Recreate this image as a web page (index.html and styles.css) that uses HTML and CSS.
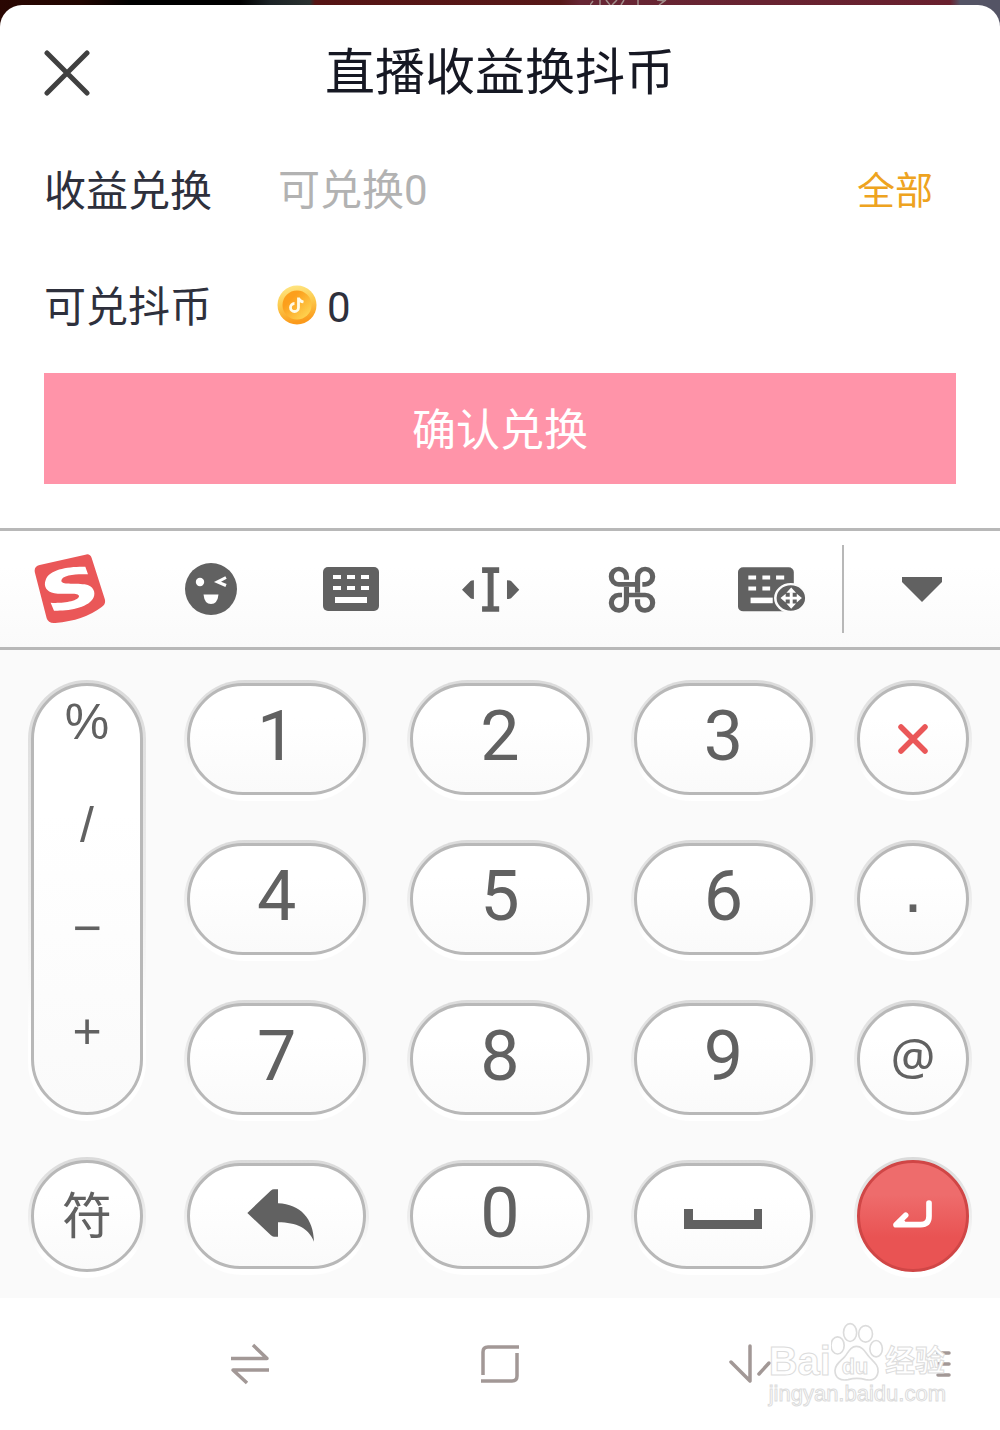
FILE: index.html
```html
<!DOCTYPE html>
<html lang="zh-CN">
<head>
  <meta charset="UTF-8" />
  <meta name="viewport" content="width=device-width, initial-scale=1.0" />
  <title>直播收益换抖币</title>
  <link rel="stylesheet" href="styles.css">
</head>
<body>
  <svg class="backdrop" width="80" height="5" viewBox="0 0 80 5" fill="none" stroke="#a08d8a" stroke-width="1.500"><path d="M3 1L0 5M10 0V5M16 0L20 5M27 0L22 5M34 0L31 5M48 0V5M76 0L69 5M67 0L75 1"/></svg>

  <main class="sheet">
    <header class="sheet-header">
      <button class="close" aria-label="关闭">
        <svg width="46" height="46" viewBox="0 0 46 46"><path d="M3 3L43 43M43 3L3 43" fill="none" stroke="#404040" stroke-width="5" stroke-linecap="round"/></svg>
      </button>
      <h1>直播收益换抖币</h1>
    </header>

    <form class="exchange" onsubmit="return false">
      <div class="row">
        <label for="amount">收益兑换</label>
        <input type="text" id="amount" inputmode="numeric" placeholder="可兑换0">
        <button type="button" class="all" onclick="fillAll()">全部</button>
      </div>
      <div class="row">
        <label for="coins">可兑抖币</label>
        <svg class="coin" width="40" height="40" viewBox="0 0 40 40">
          <defs>
            <linearGradient id="rim" x1="0" y1="0" x2="0.2" y2="1"><stop offset="0" stop-color="#ffe98a"/><stop offset="0.5" stop-color="#fccb4e"/><stop offset="1" stop-color="#fb9a1b"/></linearGradient>
            <linearGradient id="face" x1="0" y1="0" x2="1" y2="1"><stop offset="0.3" stop-color="#fc9f1c"/><stop offset="1" stop-color="#ffdf5c"/></linearGradient>
          </defs>
          <circle cx="20" cy="20" r="19.5" fill="url(#rim)"/>
          <circle cx="20" cy="20" r="14.5" fill="url(#face)"/>
          <path d="M21.5 12.5V22.5A4 4 0 1 1 17.5 18.5M21.5 13.5C22.5 15.5 24 16.5 26.5 17" fill="none" stroke="#fffbe6" stroke-width="2.8"/>
        </svg>
        <output id="coins">0</output>
      </div>
      <button type="submit" class="confirm">确认兑换</button>
    </form>
  </main>

  <section class="keyboard">
    <div class="toolbar">
      <div class="tools">
        <button aria-label="搜狗">
          <svg width="72" height="70" viewBox="101 103 216 210">
            <path d="M118 136L255 105Q269 101 274 115L313 237Q318 253 304 262Q250 303 165 310Q144 312 139 296L104 160Q99 141 118 136Z" fill="#ea5758"/>
            <path d="M255 141L263 164C238 162 184 164 183 183C183 196 220 189 253 194C281 199 286 219 280 233C267 264 205 275 161 273L151 249C180 252 237 245 236 229C235 216 189 226 162 221C138 217 129 199 136 181C146 149 203 140 255 141Z" fill="#fff"/>
          </svg>
        </button>
        <button aria-label="表情">
          <svg width="52" height="52" viewBox="0 0 52 52">
            <circle cx="26" cy="26" r="26" fill="#616161"/>
            <circle cx="15" cy="19" r="4.2" fill="#fff"/>
            <path d="M41 14.5L32.5 18.8L41 22.5" fill="none" stroke="#fff" stroke-width="3"/>
            <path d="M18.5 31.5H33.5Q32.500 41 26 41Q19.500 41 18.5 31.500Z" fill="#fff"/>
          </svg>
        </button>
        <button aria-label="键盘">
          <svg width="56" height="44" viewBox="0 0 56 44">
            <rect width="56" height="44" rx="5" fill="#616161"/>
            <path d="M10 10H18M24 10H32M38 10H46M10 21H18M24 21H32M38 21H46" stroke="#fff" stroke-width="4"/>
            <path d="M12 33H44" stroke="#fff" stroke-width="6"/>
          </svg>
        </button>
        <button aria-label="光标">
          <svg width="58" height="45" viewBox="114 139 156 135" preserveAspectRatio="none" fill="#616161">
            <path d="M168 140H214V157H199V257H214V273H168V257H183V157H168Z"/>
            <path d="M114 207L137 181Q139 179 146 179V235Q139 235 137 233ZM268 207L246 181Q243 179 235 179V235Q243 235 246 233Z"/>
          </svg>
        </button>
        <button aria-label="快捷短语">
          <svg width="48" height="47" viewBox="507 136 130 141" preserveAspectRatio="none" fill="none" stroke="#616161" stroke-width="14">
            <path d="M557 177V168A20.500 23 0 1 0 536 191H593"/>
            <path d="M600 191H607A20.500 23 0 1 0 587 168V216"/>
            <path d="M587 236V245A20.500 23 0 1 0 607 223H551"/>
            <path d="M545 223H536A20.500 23 0 1 0 557 245V198"/>
          </svg>
        </button>
        <button aria-label="移动键盘">
          <svg width="68" height="45" viewBox="861 139 184 136" preserveAspectRatio="none">
            <rect x="861" y="140" width="151" height="133" rx="14" fill="#616161"/>
            <path d="M889 171H910M927 171H948M964 171H986M889 204H910M927 204H948" stroke="#fff" stroke-width="12"/>
            <path d="M895 240H955" stroke="#fff" stroke-width="17"/>
            <circle cx="1004" cy="233" r="42" fill="#616161" stroke="#fcfcfc" stroke-width="7"/>
            <path d="M1005 215V251M987 233H1023" stroke="#fff" stroke-width="8"/>
            <path d="M1005 201L1018 217H992ZM1005 265L1018 249H992ZM976 233L990 220V246ZM1034 233L1020 220V246Z" fill="#fff"/>
          </svg>
        </button>
      </div>
      <div class="fold">
        <button aria-label="收起">
          <svg width="40" height="26" viewBox="0 0 40 26"><path d="M0 1H40V6L20 26L0 6Z" fill="#616161"/></svg>
        </button>
      </div>
    </div>

    <div class="keys">
      <div class="key symbols">
        <button>%</button>
        <button>/</button>
        <button>−</button>
        <button>+</button>
      </div>
      <button class="key digit">1</button>
      <button class="key digit">2</button>
      <button class="key digit">3</button>
      <button class="key" aria-label="删除">
        <svg width="30" height="30" viewBox="0 0 30 30"><path d="M3 3L27 27M27 3L3 27" stroke="#ea5758" stroke-width="5.500" stroke-linecap="round"/></svg>
      </button>
      <button class="key digit">4</button>
      <button class="key digit">5</button>
      <button class="key digit">6</button>
      <button class="key dot">.</button>
      <button class="key digit">7</button>
      <button class="key digit">8</button>
      <button class="key digit">9</button>
      <button class="key sign at">@</button>
      <button class="key sign">符</button>
      <button class="key short" aria-label="返回">
        <svg width="76" height="54" viewBox="717 629 228 162"><path d="M742 701L812 634Q817 630 822 630H834V672C902 675 940 718 942 787C925 745 890 730 834 729V772H822Q817 772 812 767Z" fill="#616161"/></svg>
      </button>
      <button class="key digit short">0</button>
      <button class="key short" aria-label="空格">
        <svg class="space" width="78" height="20" viewBox="0 0 78 20"><path d="M0 0H9V11H70V0H78V20H0Z" fill="#616161"/></svg>
      </button>
      <button class="key enter" aria-label="回车">
        <svg width="40" height="32" viewBox="882 659 120 96" fill="none" stroke="#fff" stroke-width="17" stroke-linecap="round" stroke-linejoin="round"><path d="M990 668V708Q990 733 965 733H891L920 705"/><path d="M891 733L912 726" stroke-width="14"/></svg>
      </button>
    </div>
  </section>

  <nav class="system-nav">
    <button aria-label="切换">
      <svg width="40" height="42" viewBox="0 0 40 42" fill="none" stroke="#a29896" stroke-width="3.500" stroke-linejoin="round"><path d="M1 15.500H37L23 2M39 27H3L17 40"/></svg>
    </button>
    <button aria-label="主页">
      <svg width="38" height="38" viewBox="0 0 38 38" fill="none" stroke="#a29896" stroke-width="3.500"><path d="M38 2H7Q2 2 2 7V30M0 36H31Q36 36 36 31V8"/></svg>
    </button>
    <button aria-label="返回">
      <svg width="42" height="40" viewBox="0 0 42 40" fill="none" stroke="#a29896" stroke-width="3.500" stroke-linecap="round" stroke-linejoin="round"><path d="M2 18L21 37V2M30 30L40 19"/></svg>
    </button>
    <button aria-label="菜单">
      <svg width="26" height="26" viewBox="0 0 26 26" stroke="#a29896" stroke-width="3.500" stroke-linecap="round"><path d="M13 2H24M13 13H24M13 24H24"/></svg>
    </button>
    <div class="watermark">
      <div class="brand">
        <span class="latin">Bai</span>
        <svg width="54" height="60" viewBox="385 66 164 180" fill="#fff" stroke="#dcdcdc" stroke-width="5">
          <ellipse cx="405" cy="136" rx="20" ry="26"/><ellipse cx="443" cy="97" rx="20" ry="27"/><ellipse cx="490" cy="101" rx="21" ry="25"/><ellipse cx="522" cy="146" rx="19" ry="25"/>
          <path d="M462 139C482 139 489 157 502 172C516 187 530 197 528 216C524 241 506 243 490 240C472 235 455 235 437 240C414 244 398 236 397 213C397 194 413 185 427 170C438 156 444 139 462 139Z"/>
          <text x="418" y="222">du</text>
        </svg>
        <span class="han">经验</span>
      </div>
      <div class="site">jingyan.baidu.com</div>
    </div>
  </nav>

  <script>
    function fillAll() {
      document.getElementById('amount').value = document.getElementById('coins').value;
    }
  </script>
</body>
</html>
```

FILE: styles.css
```css
:root {
  --text-color: #2e303c;
  --key-color: #616161;
  --key-border: #b8b8b8;
  --gold: #eea320;
  --red: #ea5758;
}

* {
  box-sizing: border-box;
}

body {
  position: relative;
  margin: 0;
  min-height: 100vh;
  display: flex;
  flex-direction: column;
  padding-top: 5px;
  font-family: Roboto, "Noto Sans CJK SC", sans-serif;
  color: var(--text-color);
  background: linear-gradient(to right, #2a0702 0, #210500 8%, #000 13%, #000 24%, #1c2326 27%, #2a3130 31%, #561414 31.5%, #571818 56%, #672634 58%, #69202e 95%, #545465 96%, #545465 100%) #fff;
  background-size: 100% 40px;
  background-repeat: no-repeat;
}

button {
  padding: 0;
  border: none;
  background: none;
  color: inherit;
  font-family: inherit;
  cursor: pointer;
}

svg {
  display: block;
}

.backdrop {
  position: absolute;
  top: 0;
  left: 59%;
}

.sheet {
  padding: 0 44px 44px;
  background: #fff;
  border-radius: 22px 22px 0 0;
}

.sheet-header {
  display: grid;
  grid-template-columns: 46px 1fr 46px;
  align-items: center;
  height: 126px;
  padding-top: 10px;
}

.sheet-header h1 {
  margin: 0;
  font-size: 50px;
  font-weight: 400;
  line-height: 72px;
  text-align: center;
  color: #161823;
}

.row {
  display: flex;
  align-items: center;
  height: 116px;
  font-size: 42px;
}

.row label {
  flex: 0 0 234px;
  padding-bottom: 4px;
}

.row input {
  flex: 1;
  min-width: 0;
  padding: 2px 0 0;
  border: none;
  outline: none;
  font: inherit;
  color: inherit;
}

.row input::placeholder {
  color: #b2b2b2;
}

.row output {
  padding-top: 4px;
}

.all {
  margin-right: 23px;
  padding-bottom: 4px;
  font-size: 38px;
  color: var(--gold);
}

.coin {
  margin: 0 10px 0 -1px;
}

.confirm {
  width: 100%;
  height: 111px;
  margin-top: 10px;
  padding-bottom: 4px;
  font-size: 44px;
  color: #fff;
  background: #ff94a9;
}

.keyboard {
  background: #fafafa;
}

.toolbar {
  display: flex;
  align-items: center;
  height: 122px;
  border-top: 3px solid var(--key-border);
  border-bottom: 3px solid var(--key-border);
  background: linear-gradient(#fff 30%, #fafafa);
}

.tools {
  flex: 27;
  display: grid;
  grid-template-columns: repeat(6, 1fr);
  justify-items: center;
  align-items: center;
}

.fold {
  flex: 5;
  display: flex;
  justify-content: center;
  align-items: center;
  height: 88px;
  border-left: 2px solid var(--key-border);
}

.keys {
  display: grid;
  grid-template-columns: 112px repeat(3, 1fr) 112px;
  grid-template-rows: repeat(3, 112px) 106px;
  gap: 48px 44px;
  align-items: center;
  padding: 33px 31px 29px;
  isolation: isolate;
}

.key {
  position: relative;
  display: flex;
  justify-content: center;
  align-items: center;
  height: 112px;
  border: 3px solid var(--key-border);
  border-radius: 56px;
  background: linear-gradient(#fff 30%, #fafafa);
  color: var(--key-color);
  font-size: 50px;
}

/* bevel round each key, dark above and light below */
.key::before {
  content: "";
  position: absolute;
  inset: -6px -6px -9px;
  z-index: -1;
  border-radius: 62px;
  background: linear-gradient(#dadada, #eee 50%, #fff 80%);
}

.digit {
  padding-bottom: 6px;
  font-size: 70px;
}

.sign {
  padding-bottom: 8px;
}

.at {
  font-family: "Noto Sans", sans-serif;
}

.dot {
  padding-bottom: 22px;
  font-family: "Liberation Sans", sans-serif;
  font-size: 70px;
}

.short {
  height: 106px;
}

.space {
  margin-top: 6px;
}

.symbols {
  grid-row: span 3;
  flex-direction: column;
  justify-content: flex-start;
  gap: 43px;
  height: 432px;
  padding-top: 6px;
}

.symbols button {
  width: 100%;
  font-family: "Liberation Sans", sans-serif;
  font-size: 50px;
  line-height: 60px;
}

.enter {
  border-color: #d04646;
  background: linear-gradient(#ee6c6c 30%, #e95353 70%);
}

.system-nav {
  position: relative;
  flex: 1;
  display: grid;
  grid-template-columns: 2fr 2fr 2fr 1fr;
  justify-items: center;
  align-items: center;
  min-height: 132px;
  padding-left: 12.5%;
  background: #fff;
}

.watermark {
  position: absolute;
  top: 24px;
  right: 54px;
  color: #fff;
  font-family: "Liberation Sans", "Noto Sans CJK SC", sans-serif;
  -webkit-text-stroke: 1px #dcdcdc;
}

.brand {
  display: flex;
  align-items: flex-end;
  height: 60px;
}

.brand .latin {
  font-size: 40px;
  font-weight: 700;
  line-height: 42px;
}

.brand text {
  font-size: 66px;
  font-weight: 700;
  stroke-width: 3px;
}

.brand .han {
  font-size: 30px;
  font-weight: 700;
  line-height: 42px;
}

.site {
  font-size: 22px;
  line-height: 24px;
}
```
